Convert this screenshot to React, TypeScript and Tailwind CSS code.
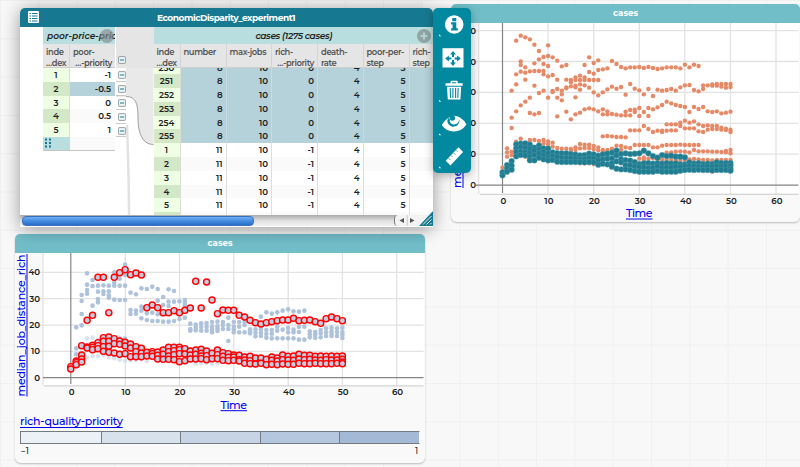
import { clsx } from 'clsx'

type Columns = [number, number[]][]

// heights are in thirds of a pixel, measured down from the top of the desktop
const ORANGE: Columns = [
  [0, [503]], [1, [445, 457, 470]], [2, [272, 353, 384, 455, 465]],
  [3, [122, 223, 253, 334, 425]], [4, [107, 184, 195, 215, 316, 416]],
  [5, [112, 202, 218, 239, 305, 470]], [6, [118, 214, 293, 339, 420, 428]],
  [7, [134, 190, 213, 257, 343, 420, 483]], [8, [153, 178, 213, 279, 339, 423]],
  [9, [171, 192, 213, 223, 272, 420, 430]], [10, [136, 168, 198, 229, 293, 424, 433]],
  [11, [172, 225, 273, 276, 428, 440]], [12, [182, 239, 267, 293, 349, 444]],
  [13, [199, 272, 283, 301, 446]], [14, [195, 239, 262, 265, 335, 446]],
  [15, [240, 247, 259, 358, 447, 452]], [16, [232, 240, 257, 262, 292, 343, 442, 450]],
  [17, [227, 240, 253, 269, 338, 432, 445, 490]], [18, [195, 232, 240, 256, 328, 434, 444, 490]],
  [19, [172, 216, 240, 263, 325, 434, 444, 490]], [20, [189, 221, 240, 277, 328, 438, 448, 492]],
  [21, [181, 210, 240, 286, 334, 442, 451]], [22, [208, 277, 328, 343, 409, 450, 456]],
  [23, [205, 268, 334, 343, 408, 450]], [24, [183, 260, 342, 409, 446]],
  [25, [192, 266, 344, 411, 437]], [26, [201, 261, 346, 411, 438, 450]],
  [27, [205, 284, 335, 346, 412, 442]], [28, [202, 252, 330, 346, 391, 444]],
  [29, [202, 266, 329, 336, 391, 435]], [30, [201, 271, 324, 348, 391, 435, 476]],
  [31, [204, 283, 336, 378, 435, 472, 480]], [32, [201, 267, 324, 348, 387, 435, 476]],
  [33, [204, 288, 328, 396, 442, 475]], [34, [207, 269, 322, 392, 442, 480]],
  [35, [205, 272, 315, 392, 396, 437, 478]], [36, [202, 270, 305, 373, 392, 435, 458, 480]],
  [37, [202, 267, 310, 373, 391, 435, 457, 480]], [38, [202, 272, 315, 373, 391, 435, 455, 482]],
  [39, [205, 262, 318, 368, 378, 434, 454, 482]], [40, [194, 256, 321, 362, 385, 435, 455, 480]],
  [41, [202, 255, 336, 368, 385, 435, 457, 478]], [42, [194, 270, 321, 364, 385, 435, 450, 477]],
  [43, [198, 274, 327, 373, 394, 435, 454, 478]], [44, [256, 267, 321, 378, 396, 454, 480]],
  [45, [256, 334, 376, 389, 454, 480]], [46, [253, 257, 336, 378, 387, 455, 481, 515]],
  [47, [252, 257, 334, 378, 387, 455, 480]], [48, [252, 260, 340, 383, 389, 456, 480]],
  [49, [252, 263, 338, 386, 390, 453, 457, 480]], [50, [252, 261, 335, 389, 396, 450, 460, 480]],
]

const TEAL: Columns = [
  [0, [517, 526]], [1, [495, 506, 515]], [2, [483, 497, 509]],
  [3, [433, 445, 456, 469]], [4, [431, 440, 455, 465]], [5, [430, 443, 457, 466]],
  [6, [434, 446, 458, 470, 481]], [7, [443, 452, 465, 481]], [8, [437, 448, 460, 473]],
  [9, [445, 456, 467, 478]], [10, [446, 460, 473, 481]], [11, [457, 468, 480]],
  [12, [459, 471, 485]], [13, [460, 473, 486]], [14, [460, 474, 486]],
  [15, [462, 474, 486]], [16, [464, 476, 486]], [17, [466, 478, 486]],
  [18, [465, 477, 487]], [19, [461, 474, 486]], [20, [463, 475, 487]],
  [21, [467, 480, 494]], [22, [463, 478, 491]], [23, [461, 476, 493]],
  [24, [458, 475, 490, 500]], [25, [452, 466, 484, 506]], [26, [462, 478, 487, 508]],
  [27, [460, 480, 496, 508]], [28, [462, 482, 496, 510]], [29, [461, 486, 499, 513]],
  [30, [460, 492, 501, 515]], [31, [452, 490, 502, 515]], [32, [460, 489, 504, 515]],
  [33, [468, 491, 503, 515]], [34, [473, 490, 500, 513]], [35, [465, 491, 504, 515]],
  [36, [468, 489, 502, 515]], [37, [467, 491, 503, 515]], [38, [470, 490, 500, 515]],
  [39, [470, 493, 501, 512]], [40, [472, 493, 499, 510]], [41, [487, 497, 509]],
  [42, [491, 499, 510]], [43, [489, 500, 509]], [44, [492, 500, 510]],
  [45, [491, 499, 510]], [46, [492, 500, 511]], [47, [487, 498, 510]],
  [48, [489, 500, 510]], [49, [489, 499, 510]], [50, [489, 497, 506, 512]],
]

// same unit, measured down from the top of the lower chart
const BLUE: Columns = [
  [1, [292, 355, 373]], [2, [195, 213, 252, 286]], [3, [130, 164, 180, 191]],
  [4, [150, 168, 227]], [5, [167, 185, 207, 217]], [6, [166, 184, 192]],
  [7, [167, 184, 196, 203]], [8, [127, 158, 167, 209]], [9, [146, 167, 210, 326]],
  [10, [104, 135, 167, 210, 326]], [11, [188, 240, 252]], [12, [193, 242, 251]],
  [13, [175, 230, 242, 265]], [14, [177, 250, 270]], [15, [170, 248, 273]],
  [16, [212, 177, 253, 273]], [17, [201, 225, 275]], [18, [178, 215, 228, 275]],
  [19, [183, 215, 273]], [20, [214, 267]], [21, [210, 218, 226, 263]],
  [22, [281, 297, 302]], [23, [284, 293, 301]], [24, [280, 291, 302]],
  [25, [279, 291, 302]], [26, [276, 290, 299, 307]], [27, [275, 289, 296, 303]],
  [28, [276, 285, 297]], [29, [263, 285, 297, 333]], [30, [276, 290, 298, 307]],
  [31, [276, 290, 307]], [32, [275, 285, 307]], [33, [298, 304, 310]],
  [34, [298, 308, 319]], [35, [260, 298, 308, 318]], [36, [247, 300, 312, 323]],
  [37, [251, 300, 311, 325]], [38, [247, 290, 302, 325]], [39, [242, 299, 325]],
  [40, [238, 294, 307, 325]], [41, [244, 299, 307, 325]], [42, [245, 291, 306, 329]],
  [43, [242, 290, 329]], [44, [304, 313, 322]], [45, [306, 314, 324]],
  [46, [300, 310, 322]], [47, [295, 307, 318]], [48, [293, 303, 311, 318]],
  [49, [295, 306, 318]], [50, [293, 306, 314, 324]],
]

const PALE: Columns = [
  [3, [325, 383]], [4, [323, 378]], [5, [330, 378]], [6, [375]], [7, [380]], [8, [385]],
  [9, [389]], [10, [392]], [11, [390]], [12, [390]], [13, [388]], [14, [393]],
  [20, [399]], [23, [401]], [24, [400]], [25, [398]], [26, [402]], [27, [400]], [37, [375]],
]

const RED: Columns = [
  [0, [410, 417]], [1, [393, 398, 404]], [2, [347, 375, 387, 396]],
  [3, [271, 351, 354]], [4, [256, 346, 352, 359]], [5, [142, 338, 347, 356]],
  [6, [142, 323, 334, 350, 364]], [7, [248, 321, 334, 349, 367]], [8, [142, 326, 341, 369]],
  [9, [128, 333, 343, 373]], [10, [119, 337, 348, 371]], [11, [134, 342, 354, 380]],
  [12, [129, 350, 365, 380]], [13, [135, 355, 369, 380]], [14, [233, 367, 378]],
  [15, [225, 365, 371, 379]], [16, [233, 366, 376, 387]], [17, [248, 360, 373, 388]],
  [18, [248, 352, 365, 378, 388]], [19, [242, 352, 362, 374, 389]],
  [20, [248, 352, 359, 371, 395]], [21, [241, 356, 372, 392]], [22, [234, 363, 375, 387]],
  [23, [154, 360, 373, 387]], [24, [234, 358, 370, 378, 386]], [25, [156, 363, 377, 389]],
  [26, [210, 370, 386]], [27, [251, 360, 374, 386]], [28, [240, 368, 379, 391]],
  [29, [241, 371, 382, 392]], [30, [241, 375, 381, 391]], [31, [256, 376, 389, 393]],
  [32, [261, 381, 390, 400]], [33, [271, 379, 392, 401]], [34, [278, 384, 402]],
  [35, [282, 384, 400]], [36, [278, 388, 404]], [37, [275, 381, 391, 403]],
  [38, [272, 384, 393, 404]], [39, [270, 375, 389, 402]], [40, [270, 379, 390, 403]],
  [41, [265, 378, 391, 403]], [42, [272, 373, 387, 400]], [43, [271, 376, 389, 401]],
  [44, [270, 376, 388, 401]], [45, [275, 379, 390, 400]], [46, [280, 378, 391, 401]],
  [47, [266, 379, 389, 401]], [48, [261, 378, 390, 401]], [49, [266, 379, 390, 400]],
  [50, [272, 378, 388, 396, 401]],
]

const ATTRIBUTES = [
  { top: 'number', bottom: '' },
  { top: 'max-jobs', bottom: '' },
  { top: 'rich-', bottom: '…-priority' },
  { top: 'death-', bottom: 'rate' },
  { top: 'poor-per-', bottom: 'step' },
  { top: 'rich-', bottom: 'step' },
]

const CASES = [
  ...[250, 251, 252, 253, 254, 255].map(n => ({ index: n, values: ['8', '10', '0', '4', '5', ''], selected: true })),
  ...[1, 2, 3, 4, 5, 6].map(n => ({ index: n, values: ['11', '10', '-1', '4', '5', ''], selected: false })),
]

const PARENTS = ['-1', '-0.5', '0', '0.5', '1']

const GRID = 'grid grid-cols-[27px_46px_45.5px_46px_45.5px_46px_46px]'
const ATTR_ROW = 'h-6 whitespace-nowrap border-b border-[#cfcfcf] bg-[#e5e5e5] text-[8.4px] leading-[10.5px] font-semibold tracking-[-0.045em] text-[#555]'

interface DotsProps {
  data: Columns
  x0: number
  step: number
  top?: number
  r: number
  className: string
}

function Dots({ data, x0, step, top = 0, r, className }: DotsProps) {
  return (
    <g className={className}>
      {data.map(([t, ys]) => ys.map(y => (
        <circle key={`${t}-${y}`} cx={x0 + t * step} cy={top + y / 3} r={r} />
      )))}
    </g>
  )
}

function CardTitle() {
  return (
    <div className="flex h-[19px] shrink-0 items-center justify-center rounded-t-[5px] bg-[#71bec9] text-[8.6px] font-bold text-white">
      cases
    </div>
  )
}

function TimeGraph() {
  return (
    <section className="absolute left-[451px] top-1 flex h-[218px] w-[349px] flex-col rounded-[6px] bg-[#f9f9f9] shadow-[0_1px_2px_#bbb]">
      <CardTitle />
      <svg viewBox="451 23 349 199" className="h-[199px] w-[349px]">
        <rect x="479" y="23" width="320" height="170.5" fill="#fff" />
        <g stroke="#e2e2e2" strokeWidth="1.3">
          {[548, 593.7, 639.3, 684.8, 730.5, 776].map(x => <path key={x} d={`M${x} 23V194`} />)}
          {[30.7, 61.5, 92.4, 123.4, 154.2].map(y => <path key={y} d={`M476 ${y}H798.5`} />)}
          <path d="M478.7 23V194" />
          <path d="M480 194.3H798.5" stroke="#d4d4d4" />
        </g>
        <path d="M502.5 23V193M476 185.2H798.5" stroke="#858585" strokeWidth="1.2" />
        <Dots data={ORANGE} x0={502.5} step={4.56} r={2.2} className="fill-[#e58966]" />
        <Dots data={TEAL} x0={502.5} step={4.56} r={2.85} className="fill-[#1f7c91] stroke-[#5aa3b1] stroke-[0.4]" />
        <g fontSize="8.6" fontWeight="600" fill="#222" textAnchor="middle">
          {[0, 10, 20, 30, 40, 50, 60].map(n => <text key={n} x={503.3 + n * 4.56} y="203.8">{n}</text>)}
          {[30.7, 61.5, 92.4, 123.4, 154.2, 185.2].map(y => <text key={y} x="473.2" y={y + 3}>0</text>)}
        </g>
        <g fill="#0000ee" fontWeight="500">
          <text x="626" y="217.3" fontSize="11" textLength="26.5">Time</text>
          <path d="M626 219h26.5M463 188V100" stroke="#0000ee" strokeWidth="1" />
          <text transform="translate(461.3 188) rotate(-90)" fontSize="11" textLength="120">median_job_distance</text>
        </g>
      </svg>
    </section>
  )
}

function RichGraph() {
  return (
    <section className="absolute left-[15px] top-[234px] flex h-[229px] w-[410px] flex-col rounded-[6px] bg-[#f9f9f9] shadow-[0_1px_2px_#bbb]">
      <CardTitle />
      <svg viewBox="15 253 410 160" className="h-[160px] w-[410px] shrink-0">
        <rect x="43" y="253" width="381" height="132.5" fill="#fff" />
        <g stroke="#e2e2e2" strokeWidth="1.3">
          {[125.3, 179.5, 233.8, 288.2, 342.4, 396.7].map(x => <path key={x} d={`M${x} 253V386`} />)}
          {[272.3, 298.7, 325.2, 351.4].map(y => <path key={y} d={`M40 ${y}H423.5`} />)}
          <path d="M43 253V385" />
          <path d="M44 385.8H423.5" stroke="#d4d4d4" />
        </g>
        <path d="M70.8 253V384M43 377.7H423.5" stroke="#858585" strokeWidth="1.2" />
        <Dots data={PALE} x0={70.8} step={5.432} top={230} r={2.3} className="fill-[#dae3ed]" />
        <Dots data={BLUE} x0={70.8} step={5.432} top={230} r={2.3} className="fill-[#aec2da]" />
        <Dots data={RED} x0={70.8} step={5.432} top={230} r={3.05} className="fill-[#c0cee1] stroke-[#ff0000] stroke-[1.4]" />
        <g fontSize="8.6" fontWeight="600" fill="#222">
          {[0, 10, 20, 30, 40, 50, 60].map(n => (
            <text key={n} x={71.6 + n * 5.432} y="395.3" textAnchor="middle">{n}</text>
          ))}
          {[40, 30, 20, 10, 0].map(n => <text key={n} x="40" y={380.8 - n * 2.635} textAnchor="end">{n}</text>)}
        </g>
        <g fill="#0000ee" fontWeight="500">
          <text x="220.5" y="409" fontSize="11" textLength="26.5">Time</text>
          <path d="M220.5 410.7H247M27 396.5V254" stroke="#0000ee" strokeWidth="1" />
          <text transform="translate(25.2 396.5) rotate(-90)" fontSize="11" textLength="142">median_job_distance_rich</text>
        </g>
      </svg>
      <div className="flex flex-col px-[5px]">
        <span className="h-[18px] self-start text-[11px] leading-[17px] font-medium tracking-[-0.02em] text-[#0000ee] underline underline-offset-2">
          rich-quality-priority
        </span>
        <div className="grid h-[13px] grid-cols-5 border border-[#747b82] border-r-transparent">
          <div className="bg-[#ebf1f6]" />
          <div className="border-l border-[#747b82] bg-[#d8e2ed]" />
          <div className="border-l border-[#747b82] bg-[#c7d4e5]" />
          <div className="border-l border-[#747b82] bg-[#b5c7de]" />
          <div className="border-l border-[#747b82] bg-[#a4b9d5]" />
        </div>
        <div className="flex justify-between pl-px pr-[2px] text-[8.4px] leading-[14px] font-medium text-[#222]">
          <span>−1</span>
          <span>1</span>
        </div>
      </div>
    </section>
  )
}

function Collapse() {
  return (
    <svg viewBox="0 0 8 8" className="size-2 shrink-0">
      <rect x="0.6" y="0.6" width="6.8" height="6.8" rx="0.6" fill="#eef6f8" stroke="#8f9698" strokeWidth="0.9" />
      <path d="M2 4h4" stroke="#177991" strokeWidth="1" />
    </svg>
  )
}

function Plus() {
  return (
    <svg viewBox="0 0 14 14" className="size-[14px] shrink-0">
      <circle cx="7" cy="7" r="7" fill="#828b8c" fillOpacity="0.7" />
      <path d="M7 3.5v7M3.5 7h7" stroke="#b9dedf" strokeWidth="1.6" />
    </svg>
  )
}

function IndexHeader() {
  return (
    <div className="flex flex-col border-r border-[#d4d4d4] px-[3px] pt-[3px]">
      <span>inde</span>
      <span className="text-right">…dex</span>
    </div>
  )
}

function ParentTable() {
  return (
    <div className="w-[73px] shrink-0 border-r border-white">
      <div className="relative flex h-[17px] items-center overflow-hidden bg-[#b9dedf] pl-1">
        <span className="shrink-0 whitespace-nowrap text-[9px] font-semibold italic">poor-price-prior</span>
        <div className="absolute right-px top-[2px]">
          <svg viewBox="0 0 14 14" className="size-[14px]">
            <circle cx="7" cy="7" r="7" fill="#828b8c" fillOpacity="0.65" />
          </svg>
        </div>
      </div>
      <div className={`${ATTR_ROW} grid grid-cols-[27px_1fr]`}>
        <IndexHeader />
        <div className="flex flex-col px-[3px] pt-[3px]">
          <span>poor-</span>
          <span className="text-right">…-priority</span>
        </div>
      </div>
      {PARENTS.map((value, i) => (
        <div key={value} className="grid h-[13.75px] grid-cols-[27px_1fr] text-[8.6px] leading-[14px] font-semibold">
          <div className={clsx('border-r border-b border-[#d9dfd5] text-center', i % 2 ? 'bg-[#d3e8c6]' : 'bg-[#eeffe3]')}>
            {i + 1}
          </div>
          <div className={clsx('border-b border-[#d8d8d8] pr-1 text-right', value === '-0.5' ? 'bg-[#b5d1d9]' : i % 2 ? 'bg-[#fafafa]' : 'bg-white')}>
            {value}
          </div>
        </div>
      ))}
      <div className="grid h-[14px] grid-cols-[27px_1fr] border-b border-[#c4c4c4]">
        <div className="bg-[#b9dedf] pl-[2px] pt-[1.5px]">
          <svg viewBox="0 0 7 10" className="h-[10px] w-[7px]" fill="#177991">
            {[0.5, 4, 7.5].map(y => (
              <g key={y}>
                <rect x="0" y={y} width="2" height="2" />
                <rect x="4" y={y} width="2" height="2" />
              </g>
            ))}
          </svg>
        </div>
        <div className="bg-[#fafafa]" />
      </div>
    </div>
  )
}

function Divider() {
  return (
    <div className="flex w-[37.5px] shrink-0 flex-col">
      <div className="flex h-[41px] shrink-0 items-end bg-[#e5e5e5] pb-[4px] pl-[2px]"><Collapse /></div>
      <div className="relative grow">
        <svg viewBox="0 0 37.5 148" className="absolute inset-0 h-[148px] w-[37.5px]">
          <path d="M0 0H37.5V76.5C26 76.5 22 67 22 50S19 28.5 10 28.5H0Z" fill="#e9e9e9" />
          <path d="M0 28.5H10C20 28.5 22 36 22 50S26 76.5 37.5 76.5" fill="none" stroke="#8b8b8b" strokeWidth="0.8" />
          <path d="M11 57C12 85 13 115 13 148" fill="none" stroke="#e1e1e1" strokeWidth="2.5" />
        </svg>
        <div className="relative flex w-[10px] flex-col">
          {PARENTS.map(v => (
            <div key={v} className="flex h-[13.9px] items-center border-b border-[#c8c8c8] bg-white/80 pl-[2px] pt-[2px]"><Collapse /></div>
          ))}
        </div>
      </div>
    </div>
  )
}

function CaseGrid() {
  return (
    <div className="w-[279px] shrink-0 overflow-hidden">
      <div className="flex h-[17px] items-center bg-[#b9dedf] pl-[102px] pr-[2px]">
        <span className="grow whitespace-nowrap text-[9px] font-semibold tracking-[-0.04em] italic">cases (1275 cases)</span>
        <Plus />
      </div>
      <div className={`${ATTR_ROW} ${GRID}`}>
        <IndexHeader />
        {ATTRIBUTES.map((a, i) => (
          <div key={i} className="flex flex-col border-r border-[#d4d4d4] px-[3px] pt-[3px]">
            <span>{a.top}</span>
            <span className={clsx(i === 2 && 'text-right')}>{a.bottom}</span>
          </div>
        ))}
      </div>
      <div className="flex h-[147px] flex-col overflow-hidden">
        <div className="-mt-[7.5px]">
          {CASES.map((row, i) => (
            <div key={row.index} className={`${GRID} h-[13.8px] text-[8.6px] leading-[15px] font-semibold`}>
              <div className={clsx('border-r border-b border-[#d9dfd5] text-center', (row.selected ? row.index : row.index + 1) % 2 ? 'bg-[#d3e8c6]' : 'bg-[#eeffe3]')}>
                {row.index}
              </div>
              {row.values.map((v, j) => (
                <div
                  key={j}
                  className={clsx(
                    'border-r border-b pr-[3px] text-right',
                    row.selected ? 'border-[#c6dce1] bg-[#b5d1d9]' : 'border-[#dedede]',
                    !row.selected && (i % 2 ? 'bg-[#fafafa]' : 'bg-white'),
                  )}
                >
                  {v}
                </div>
              ))}
            </div>
          ))}
        </div>
      </div>
    </div>
  )
}

function TableWindow() {
  return (
    <section className="absolute left-[19.5px] top-[7.5px] flex h-[219px] w-[413px] flex-col overflow-hidden rounded-t-[5px] bg-white text-[#222]">
      <header className="flex h-[19.5px] shrink-0 items-center bg-[#177991] pl-2 text-white">
        <svg viewBox="0 0 11 12" className="h-3 w-[11px]">
          <rect width="11" height="12" rx="1" fill="#fff" />
          <path d="M1.500 2.500h1.500M4 2.500h5.500M1.500 5h1.500M4 5h5.500M1.500 7.500h1.500M4 7.500h5.500M1.500 10h1.500M4 10h5.500" stroke="#177991" strokeWidth="1.100" />
        </svg>
        <span className="grow pr-[19px] text-center text-[9px] font-bold tracking-[-0.05em]">EconomicDisparity_experiment1</span>
      </header>
      <div className="flex h-[188px] shrink-0 overflow-hidden pl-[23.5px]">
        <ParentTable />
        <Divider />
        <CaseGrid />
      </div>
      <footer className="flex h-[11px] shrink-0 bg-gradient-to-b from-[#a9a9a9] via-[#dedede] to-[#f2f2f2] pl-[2.5px]">
        <div className="my-[1px] h-[9.5px] w-[232px] rounded-[4px] border border-[#366fbd] bg-gradient-to-b from-[#70aef4] via-[#438be0] to-[#2d6fca]" />
        <div className="ml-auto flex h-full items-center rounded-l-[4px] border-l border-[#777] bg-[#f3f3f3]">
          <svg viewBox="0 0 24 11" className="h-[11px] w-6" fill="#555">
            <path d="M9 3v5L4.500 5.500ZM15 3v5L19.500 5.500Z" />
            <path d="M12.300 0v11" stroke="#ccc" />
          </svg>
        </div>
        <div className="flex w-[14px] items-end overflow-visible bg-[#f3f3f3]">
          <svg viewBox="0 0 14 15" className="-mt-1 h-[15px] w-[14px] shrink-0">
            <path d="M0 15L14 0V15Z" fill="#177991" />
            <path d="M4 13.500L12.500 5M7.500 13.500L12.500 8.500M11 13.500L12.500 12" stroke="#fff" strokeWidth="0.9" />
          </svg>
        </div>
      </footer>
    </section>
  )
}

function Toolbar() {
  return (
    <nav className="absolute left-[432.5px] top-[7.5px] h-[165px] w-[38px] rounded-[5px] bg-[#02889f] shadow-[0_2px_10px_rgba(0,0,0,0.3)]">
      <svg viewBox="432.5 7.5 38 165" className="h-[165px] w-[38px]" fill="#fff">
        <circle cx="453.700" cy="24" r="9.300" />
        <path d="M451.800 17.500h4v3.200h-4ZM450.600 21.800h5.200v6h1.500v2.300h-6.700v-2.300h1.500v-3.700h-1.500Z" fill="#02889f" />
        <rect x="442" y="47.700" width="21" height="19.300" />
        <g fill="#02889f">
          <path d="M452.500 50.500l3 3.500h-2v2.500h-2V54h-2ZM452.500 65.500l3-3.500h-2v-2.500h-2V62h-2ZM444.700 58l3.700-3v2h2.500v2h-2.500v2ZM460.300 58l-3.700-3v2h-2.500v2h2.500v2Z" />
        </g>
        <path d="M445 82.700h5v-1.400q0-1 1-1h5.200q1 0 1 1v1.400h5v2.600h-17.200ZM451.500 82.700h4.200v-1h-4.200Z" fillRule="evenodd" />
        <path d="M446.500 86.300h14.200l-.8 12.700h-12.600Z" />
        <path d="M449.700 87.500l.4 10M452.400 87.500v10M455.100 87.500v10M457.700 87.500l-.4 10" stroke="#02889f" strokeWidth="1.100" />
        <path d="M441.300 124.500Q444 120 447.500 117.500Q453.500 113.500 459.500 117Q463.500 119.500 466 124Q461 131 453.500 131Q445.500 131 441.300 124.500Z" />
        <path d="M447.700 117.200a6 6 0 1 0 11 1.500q-.5 5-5 5.300q-4.500 0-4.500-5Z" fill="#02889f" />
        <circle cx="451.800" cy="117.500" r="2.800" fill="#02889f" />
        <path d="M445.200 160.300L458 146.700L462.600 151.400L449.900 165Z" />
        <path d="M448 157.700l2 2M450.500 155l1.400 1.400M453 152.300l2 2M455.500 149.700l1.400 1.400" stroke="#02889f" strokeWidth="0.700" />
        <path d="M438.300 33.800l2.600 2h-2.100ZM438.300 99.300l2.600 2h-2.100ZM438.300 132.700l2.600 2h-2.100ZM438.300 165.700l2.600 2h-2.100Z" />
      </svg>
    </nav>
  )
}

export default function App() {
  return (
    <main className="relative h-[467px] w-[800px] overflow-hidden bg-[#f8f8f8] bg-[linear-gradient(#f0f0f0_1px,transparent_1px),linear-gradient(90deg,#f0f0f0_1px,transparent_1px)] bg-[size:38.3px_38.3px] font-['Montserrat','Inter',sans-serif]">
      <TimeGraph />
      <RichGraph />
      <div className="absolute left-[19.5px] top-[7.5px] h-[219px] w-[413px] rounded-[5px] shadow-[0_2px_18px_rgba(0,0,0,0.4)]" />
      <TableWindow />
      <Toolbar />
    </main>
  )
}
